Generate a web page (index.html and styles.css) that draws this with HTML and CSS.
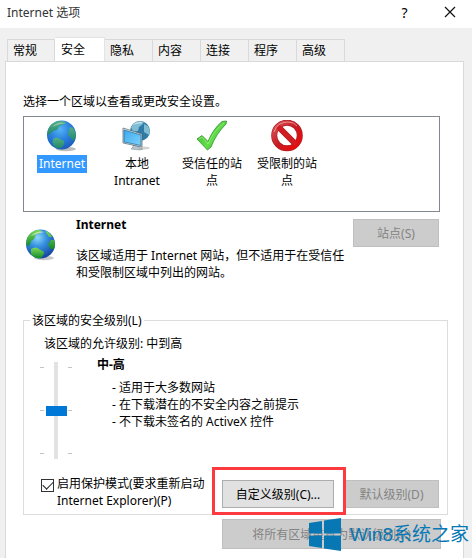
FILE: index.html
```html
<!DOCTYPE html>
<html lang="zh-CN">
<head>
<meta charset="utf-8">
<meta name="viewport" content="width=device-width, initial-scale=1">
<title>Internet 选项</title>
<link rel="stylesheet" href="styles.css">
</head>
<body>
<svg class="defs" width="0" height="0" aria-hidden="true">
  <defs>
    <radialGradient id="sea" cx="40%" cy="28%" r="75%">
      <stop offset="0" stop-color="#8fd8fa"/><stop offset=".4" stop-color="#3793e0"/><stop offset="1" stop-color="#123f9c"/>
    </radialGradient>
    <radialGradient id="seaSelected" cx="45%" cy="30%" r="75%">
      <stop offset="0" stop-color="#55b4f5"/><stop offset=".5" stop-color="#2a7fdd"/><stop offset="1" stop-color="#1956b4"/>
    </radialGradient>
    <linearGradient id="land" x1="0" y1="0" x2="0" y2="1">
      <stop offset="0" stop-color="#7ed957"/><stop offset="1" stop-color="#138a2c"/>
    </linearGradient>
    <linearGradient id="landSelected" x1="0" y1="0" x2="0" y2="1">
      <stop offset="0" stop-color="#52b083"/><stop offset="1" stop-color="#23866d"/>
    </linearGradient>
    <linearGradient id="screen" x1="0" y1="0" x2="1" y2="1">
      <stop offset="0" stop-color="#3da9ee"/><stop offset="1" stop-color="#7dd3fb"/>
    </linearGradient>
    <linearGradient id="tick" x1="0" y1="0" x2="1" y2="1">
      <stop offset="0" stop-color="#3fae2f"/><stop offset=".6" stop-color="#62de4a"/><stop offset="1" stop-color="#2f9e22"/>
    </linearGradient>
    <linearGradient id="stop" x1="0" y1="0" x2="1" y2="1">
      <stop offset="0" stop-color="#d9555a"/><stop offset=".5" stop-color="#c61b22"/><stop offset="1" stop-color="#f00808"/>
    </linearGradient>
  </defs>
</svg>

<header class="titlebar">
  <h1 class="title">Internet 选项</h1>
  <button class="caption-button" type="button" aria-label="帮助">?</button>
  <button class="caption-button" type="button" aria-label="关闭">
    <svg width="12" height="12" viewBox="0 0 12 12" aria-hidden="true"><path d="M1 1 11 11M11 1 1 11" stroke="#111" stroke-width="1.2" fill="none"/></svg>
  </button>
</header>

<main class="dialog">
  <nav class="tabs" role="tablist">
    <button class="tab" role="tab" type="button">常规</button>
    <button class="tab active" role="tab" type="button" aria-selected="true">安全</button>
    <button class="tab" role="tab" type="button">隐私</button>
    <button class="tab" role="tab" type="button">内容</button>
    <button class="tab" role="tab" type="button">连接</button>
    <button class="tab" role="tab" type="button">程序</button>
    <button class="tab" role="tab" type="button">高级</button>
  </nav>

  <section class="panel" role="tabpanel">
    <p class="prompt">选择一个区域以查看或更改安全设置。</p>

    <ul class="zones">
      <li class="zone selected">
        <svg width="32" height="32" viewBox="0 0 32 32" aria-hidden="true">
          <ellipse cx="20" cy="29" rx="10" ry="2.2" fill="#bdbdbd"/>
          <circle cx="15.500" cy="15" r="14.500" fill="url(#seaSelected)"/>
          <g fill="url(#landSelected)">
            <path d="M4 6Q8 1 15 1q4 0 5 2l-4 2-3 1-2 4-4 1-3 3-3 1Q1 10 4 6Z"/>
            <path d="M8 18q4-1 6 1l4 2q1 4-3 7-5 1-7-2-3-4 0-8Z"/>
            <path d="M24 7l3 1q3 4 3 9l-3 4-2-3-3-3 1-4Z"/>
          </g>
          <path d="M6 7Q11 1 20 3 13 4 6 7Z" fill="#fff" opacity=".35"/>
        </svg>
        <span class="zone-name">Internet</span>
      </li>
      <li class="zone">
        <svg width="32" height="32" viewBox="0 0 32 32" aria-hidden="true">
          <ellipse cx="20" cy="28" rx="9" ry="1.600" fill="#d4d4d4"/>
          <circle cx="19" cy="11" r="10" fill="#2f7ba6"/>
          <path d="M10 7q4-6 10-6l2 3-4 3-1 4-5 1ZM23 4l4 2q3 5 1 9l-5-3Z" fill="#7fbdd3"/>
          <path d="M11 5q6-5 13-2-7 0-13 2Z" fill="#fff" opacity=".6"/>
          <path d="M12 25l5 1 1 2 4 1-3 1-9-1 2-2Z" fill="#b9c4cb" stroke="#788892" stroke-width=".5"/>
          <path d="M2 8 21 14 21 27 2 23Z" fill="#e6edf2" stroke="#48606e" stroke-width=".7"/>
          <path d="M3 10 20 15 20 25.500 3 22Z" fill="url(#screen)" stroke="#20678f" stroke-width=".7"/>
        </svg>
        <span class="zone-name">本地<br>Intranet</span>
      </li>
      <li class="zone">
        <svg width="32" height="32" viewBox="0 0 32 32" aria-hidden="true">
          <path d="M1 19 6 15.500 12 21.500Q17 9 26 1.500L30.500 1 30 4Q20 14 15 27L11.500 30Z" fill="url(#tick)" stroke="#2b922b" stroke-width=".8"/>
          <path d="M3 19 6 17 12 24Q18 10 28 3" fill="none" stroke="#a9f58f" stroke-width=".9" opacity=".7"/>
        </svg>
        <span class="zone-name">受信任的站点</span>
      </li>
      <li class="zone">
        <svg width="32" height="32" viewBox="0 0 32 32" aria-hidden="true">
          <circle cx="16" cy="15.500" r="12.800" fill="#fff" stroke="#a82027" stroke-width="6"/>
          <path d="M7.500 7 24.500 24" stroke="#a82027" stroke-width="6"/>
          <circle cx="16" cy="15.500" r="12.800" fill="none" stroke="url(#stop)" stroke-width="4.600"/>
          <path d="M7 6.500 25 24.500" stroke="#d21c22" stroke-width="4.600"/>
          <path d="M3 12Q6 2 17 2q6 0 9 4" fill="none" stroke="#f3a0a2" stroke-width="1" opacity=".8"/>
        </svg>
        <span class="zone-name">受限制的站点</span>
      </li>
    </ul>

    <div class="details">
      <svg class="details-icon" width="32" height="32" viewBox="0 0 32 32" aria-hidden="true">
        <ellipse cx="19" cy="29" rx="10" ry="2.200" fill="#c9c9c9"/>
        <circle cx="15.500" cy="15" r="14.500" fill="url(#sea)"/>
        <g fill="url(#land)">
          <path d="M4 6Q8 1 14 1l3 1-3 3-3 0-2 5-3 2-1 4-3 1Q0 11 4 6Z"/>
          <path d="M6 20q5-3 8 0l5 3q0 3-3 6-7 1-10-4Z"/>
          <path d="M20 2q5 1 7 6l-3 0-2-3ZM26 11l3 0q2 4 0 9l-3 0-3-4Z"/>
        </g>
        <path d="M6 7Q11 1 20 3 13 4 6 7Z" fill="#fff" opacity=".5"/>
      </svg>
      <h2 class="details-title">Internet</h2>
      <p class="details-text">该区域适用于 Internet 网站，但不适用于在受信任<br>和受限制区域中列出的网站。</p>
      <button class="button sites" type="button" disabled>站点(S)</button>
    </div>

    <fieldset class="level">
      <legend>该区域的安全级别(L)</legend>
      <label class="allowed" for="level">该区域的允许级别: 中到高</label>
      <div class="level-row">
        <div class="slider">
          <div class="ticks"><i></i><i></i><i></i></div>
          <input id="level" class="range" type="range" min="0" max="2" value="1">
          <div class="ticks"><i></i><i></i><i></i></div>
        </div>
        <div class="level-info">
          <h3 class="level-name">中-高</h3>
          <ul class="level-list">
            <li>适用于大多数网站</li>
            <li>在下载潜在的不安全内容之前提示</li>
            <li>不下载未签名的 ActiveX 控件</li>
          </ul>
        </div>
      </div>
      <div class="level-actions">
        <input id="protect" class="check" type="checkbox" checked>
        <label class="protect-label" for="protect">启用保护模式(要求重新启动<br>Internet Explorer)(P)</label>
        <div class="highlighted">
          <button class="button custom" type="button">自定义级别(C)...</button>
        </div>
        <button class="button default" type="button" disabled>默认级别(D)</button>
      </div>
    </fieldset>

    <div class="footer">
      <button class="button reset" type="button" disabled>将所有区域重置为默认级别(R)</button>
      <div class="watermark">
        <svg width="33" height="33" viewBox="0 0 33 33" aria-hidden="true">
          <path d="M0 5 13 3V15.500H0ZM15 2.500 32 0V15.500H15ZM0 17.500H13V30L0 28ZM15 17.500H32V33L15 30.500Z" fill="#0878b4"/>
        </svg>
        <span>Win8系统之家</span>
      </div>
    </div>
  </section>
</main>
</body>
</html>
```
FILE: styles.css
```css
* {
  box-sizing: border-box;
}

body {
  margin: 0;
  min-height: 100vh;
  display: flex;
  flex-direction: column;
  background: #f0f0f0;
  color: #000;
  font: 12px/17px "Noto Sans", "Noto Sans CJK SC", sans-serif;
}

h1, h2, h3, p, ul {
  margin: 0;
  padding: 0;
  font-size: 12px;
}

ul {
  list-style: none;
}

button, input {
  margin: 0;
  font: inherit;
}

.defs {
  position: absolute;
}

.titlebar {
  display: flex;
  align-items: center;
  height: 28px;
  padding: 0 0 4px 7px;
  background: #fff;
}

.title {
  flex: 1;
  font-weight: 400;
  color: #333;
}

.caption-button {
  display: grid;
  place-items: center;
  width: 45px;
  height: 24px;
  padding: 0;
  border: 0;
  background: none;
  font-size: 14px;
}

.dialog {
  flex: 1;
  display: flex;
  flex-direction: column;
  padding: 9px 8px 0 5px;
}

.tabs {
  display: flex;
  align-items: flex-end;
  padding-left: 2px;
}

.tab {
  width: 48px;
  height: 22px;
  padding: 0 10px 0 5px;
  border: 1px solid #d9d9d9;
  border-width: 1px 1px 0 0;
  background: #f0f0f0;
  color: #000;
  text-align: left;
}

.tab:first-child {
  border-left-width: 1px;
}

.tab.active {
  width: 50px;
  height: 25px;
  margin-bottom: -1px;
  padding: 0 6px 2px;
  border-color: #e4e4e4;
  background: #fff;
}

.panel {
  flex: 1;
  padding: 31px 15px 9px 17px;
  border: 1px solid #d9d9d9;
  border-width: 1px 1px 0;
  background: #fff;
}

.zones {
  display: flex;
  gap: 15px;
  height: 96px;
  margin: 6px 8px 0 0;
  padding: 3px 8px;
  border: 1px solid #828790;
}

.zone {
  display: flex;
  flex-direction: column;
  align-items: center;
  gap: 3px;
  width: 60px;
  text-align: center;
}

.zone svg {
  flex: none;
}

.zone.selected .zone-name {
  padding: 0 2px 1px;
  background: #3399ff;
  color: #fff;
}

.details {
  display: grid;
  grid-template-columns: 53px 1fr 86px;
  grid-template-rows: 28px 34px;
  margin: 7px 9px 0 0;
}

.details-icon {
  grid-row: 1 / 3;
  margin: 10px 0 0 2px;
}

.details-title {
  line-height: 12px;
}

.details-text {
  grid-area: 2 / 2 / 3 / 4;
}

.sites {
  grid-area: 1 / 3;
}

.button {
  height: 28px;
  padding: 0;
  border: 1px solid #adadad;
  background: #e1e1e1;
  color: #000;
  white-space: nowrap;
}

.button:disabled {
  border-color: #bfbfbf;
  background: #cccccc;
  color: #838383;
}

.level {
  min-width: 0;
  margin: 31px 0 0;
  padding: 6px 8px 5px;
  border: 1px solid #dcdcdc;
}

.level legend {
  padding: 0 2px;
  margin-left: -2px;
}

.allowed {
  display: block;
  padding-left: 12px;
}

.level-row {
  display: flex;
  gap: 25px;
  padding-left: 8px;
}

.slider {
  display: flex;
  gap: 1px;
  height: 97px;
  margin-top: 10px;
}

.ticks {
  display: flex;
  flex-direction: column;
  justify-content: space-between;
  width: 4px;
  padding: 5px 0;
}

.ticks i {
  height: 1px;
  background: #c4c4c4;
}

.range {
  appearance: none;
  writing-mode: vertical-lr;
  width: 22px;
  height: 97px;
  background: linear-gradient(#e2e2e2, #e2e2e2) center / 4px 100% no-repeat;
}

.range::-webkit-slider-thumb {
  appearance: none;
  width: 21px;
  height: 10px;
  background: #0078d7;
}

.level-name {
  padding-top: 4px;
}

.level-list {
  padding: 6px 0 0 15px;
}

.level-list li::before {
  content: "- ";
}

.level-actions {
  display: flex;
  align-items: flex-start;
  padding: 16px 0 0 9px;
}

.check {
  appearance: none;
  flex: none;
  width: 13px;
  height: 13px;
  margin: 4px 3px 0 0;
  border: 1px solid #333;
  background: #fff;
}

.check:checked {
  display: grid;
  place-items: center;
}

.check:checked::before {
  content: "";
  width: 9px;
  height: 5px;
  margin-bottom: 3px;
  border: solid #222;
  border-width: 0 0 1px 1px;
  transform: rotate(-45deg);
}

.protect-label {
  flex: 1;
  white-space: nowrap;
}

.highlighted {
  position: relative;
  margin: 5px 10px 0 0;
}

.highlighted::after {
  content: "";
  position: absolute;
  inset: -13px -12px -7px -10px;
  border: 3px solid #fd3a40;
  pointer-events: none;
}

.custom {
  width: 112px;
}

.default {
  width: 95px;
  margin-top: 5px;
}

.footer {
  position: relative;
  display: flex;
  justify-content: flex-end;
  padding: 4px 7px 0 0;
}

.reset {
  width: 219px;
  height: 30px;
}

.watermark {
  position: absolute;
  right: -21px;
  top: 3px;
  display: flex;
  align-items: center;
  gap: 8px;
  color: #0878b4;
  font: 19px/33px "Liberation Sans", "Noto Sans CJK SC", sans-serif;
  white-space: nowrap;
}
```
